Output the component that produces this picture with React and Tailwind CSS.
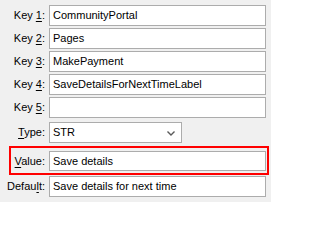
import React from "react";

const font = { fontFamily: '"Liberation Sans", Arial, sans-serif' };

function Label({ pre, u, post, className = "" }) {
  return (
    <div className={`shrink-0 text-right text-[11px] text-black leading-none ${className}`}>
      {pre}
      <span className="underline underline-offset-[2px]">{u}</span>
      {post}
    </div>
  );
}

function Field({ value, className = "" }) {
  return (
    <div
      className={`border border-[#acacac] bg-white flex items-center pl-[3px] text-[11px] text-black ${className}`}
    >
      {value}
    </div>
  );
}

export default function App() {
  const keys = [
    ["Key ", "1", ":", "CommunityPortal"],
    ["Key ", "2", ":", "Pages"],
    ["Key ", "3", ":", "MakePayment"],
    ["Key ", "4", ":", "SaveDetailsForNextTimeLabel"],
    ["Key ", "5", ":", ""],
  ];
  return (
    <div className="w-[271px] h-[202px] bg-[#f0f0f0] pt-[5px] flex flex-col overflow-hidden" style={font}>
      <div className="flex flex-col gap-[2px]">
        {keys.map(([pre, u, post, v]) => (
          <div key={u} className="flex items-center">
            <Label pre={pre} u={u} post={post} className="w-[47px] pr-[2px]" />
            <Field value={v} className="h-[21px] w-[217px] ml-[2px]" />
          </div>
        ))}
      </div>
      <div className="mt-[4px] flex items-center">
        <Label pre="" u="T" post="ype:" className="w-[47px] pr-[2px]" />
        <div className="h-[21px] w-[133px] ml-[2px] border border-[#acacac] bg-white flex items-center pl-[3px] pr-[6px] text-[11px] text-black justify-between">
          <span>STR</span>
          <svg width="8" height="5" viewBox="0 0 8 5" className="mt-[1px]">
            <path d="M0.5 0.5 L4 4 L7.5 0.5" fill="none" stroke="#5a5a5a" strokeWidth="1.4" />
          </svg>
        </div>
      </div>
      <div className="mt-[3px] ml-[9px] w-[260px] border-2 border-[#ff0000] pt-[3px] pb-[2px] flex items-center">
        <Label pre="" u="V" post="alue:" className="w-[36px] pr-[2px]" />
        <Field value="Save details" className="h-[20px] w-[217px] ml-[2px]" />
      </div>
      <div className="mt-[1px] flex items-center">
        <Label pre="Defau" u="l" post="t:" className="w-[47px] pr-[2px]" />
        <Field value="Save details for next time" className="h-[21px] w-[217px] ml-[2px]" />
      </div>
    </div>
  );
}
